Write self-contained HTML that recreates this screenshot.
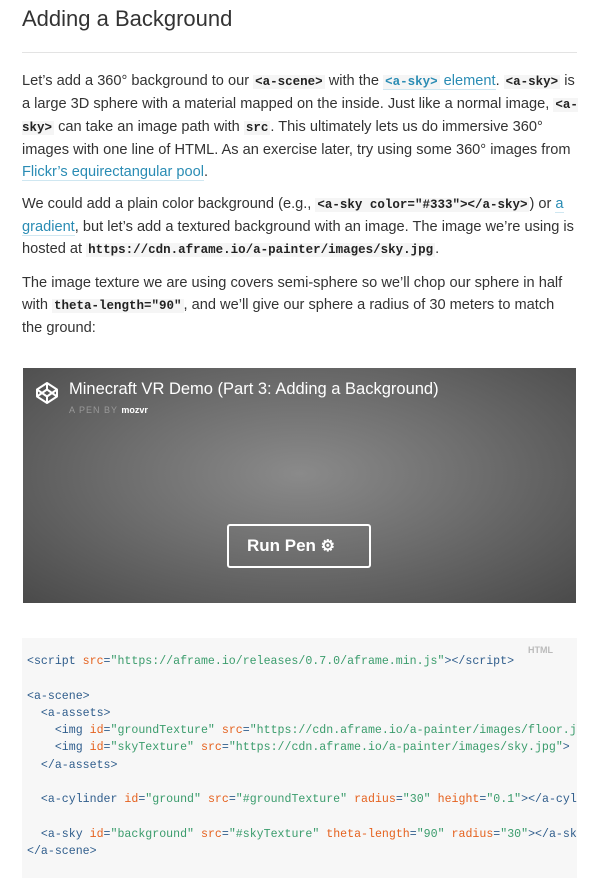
<!DOCTYPE html>
<html><head><style>
body{margin:0;background:#fff;width:604px;height:875px;overflow:hidden;font-family:"Liberation Sans",sans-serif;color:#333}
h2{position:absolute;left:22px;top:6px;margin:0;font-weight:normal;font-size:22px;color:#333}
.hr{position:absolute;left:22px;top:52px;width:555px;height:1px;background:#e3e3e3}
p{position:absolute;left:22px;width:556px;margin:0;font-size:14.6px;line-height:22px;color:#333}
code{font-family:"Liberation Mono",monospace;font-size:12.5px;font-weight:bold;background:#f5f5f5;padding:0 2px;color:#222}
a{color:#2a8cb4;text-decoration:none;border-bottom:1px solid #cfe7f1}
a code{color:#2a8cb4}
.pen{position:absolute;left:23px;top:368px;width:553px;height:235px;background:radial-gradient(ellipse at 50% 45%,#8a8a8a 0%,#6e6e6e 45%,#4a4a4a 100%)}
.pen .t{position:absolute;left:46px;top:12px;color:#fff;font-size:16.5px}
.pen .by{position:absolute;left:46px;top:37px;color:#999;font-size:9px;letter-spacing:1px}
.pen .by b{color:#fff;letter-spacing:0}
.run{position:absolute;left:204px;top:156px;width:140px;height:40px;border:2px solid #fff;border-radius:3px;color:#fff;font-weight:bold;font-size:17px;line-height:40px;text-indent:18px}
pre{position:absolute;left:22px;top:638px;width:555px;height:240px;margin:0;background:#f7f7f7;font-family:"Liberation Mono",monospace;font-size:11.6px;line-height:17.3px;padding:15px 0 0 5px;box-sizing:border-box;color:#2f5d8c;overflow:hidden;white-space:pre}
.lab{position:absolute;left:528px;top:645px;font-size:9px;font-weight:bold;color:#bbb}
.r{color:#e5621f}.g{color:#3a9c6c}
</style></head><body>
<h2>Adding a Background</h2>
<div class="hr"></div>
<p style="top:70px">Let’s add a 360° background to our <code>&lt;a-scene&gt;</code> with the <a href="#"><code>&lt;a-sky&gt;</code> element</a>. <code>&lt;a-sky&gt;</code> is a large 3D sphere with a material mapped on the inside. Just like a normal image, <code>&lt;a-sky&gt;</code> can take an image path with <code>src</code>. This ultimately lets us do immersive 360° images with one line of HTML. As an exercise later, try using some 360° images from <a href="#">Flickr’s equirectangular pool</a>.</p>
<p style="top:193px">We could add a plain color background (e.g., <code>&lt;a-sky color="#333"&gt;&lt;/a-sky&gt;</code>) or <a href="#">a gradient</a>, but let’s add a textured background with an image. The image we’re using is hosted at <code>https://cdn.aframe.io/a-painter/images/sky.jpg</code>.</p>
<p style="top:272px">The image texture we are using covers semi-sphere so we’ll chop our sphere in half with <code>theta-length="90"</code>, and we’ll give our sphere a radius of 30 meters to match the ground:</p>
<div class="pen">
<svg style="position:absolute;left:12px;top:13px" width="24" height="24" viewBox="0 0 24 24" fill="none" stroke="#fff" stroke-width="2" stroke-linejoin="round"><path d="M12 2L22 8.5V15.5L12 22L2 15.5V8.5Z M12 2V8.5 M12 15.5V22 M2 8.5L12 15.5L22 8.5 M2 15.5L12 8.5L22 15.5"/></svg>
<div class="t">Minecraft VR Demo (Part 3: Adding a Background)</div>
<div class="by">A PEN BY <b>mozvr</b></div>
<div class="run">Run Pen <span style="font-size:16px">⚙</span></div>
</div>
<pre>&lt;script <span class="r">src</span>=<span class="g">"https://aframe.io/releases/0.7.0/aframe.min.js"</span>&gt;&lt;/script&gt;

&lt;a-scene&gt;
  &lt;a-assets&gt;
    &lt;img <span class="r">id</span>=<span class="g">"groundTexture"</span> <span class="r">src</span>=<span class="g">"https://cdn.aframe.io/a-painter/images/floor.jpg"</span>&gt;
    &lt;img <span class="r">id</span>=<span class="g">"skyTexture"</span> <span class="r">src</span>=<span class="g">"https://cdn.aframe.io/a-painter/images/sky.jpg"</span>&gt;
  &lt;/a-assets&gt;

  &lt;a-cylinder <span class="r">id</span>=<span class="g">"ground"</span> <span class="r">src</span>=<span class="g">"#groundTexture"</span> <span class="r">radius</span>=<span class="g">"30"</span> <span class="r">height</span>=<span class="g">"0.1"</span>&gt;&lt;/a-cylinder&gt;

  &lt;a-sky <span class="r">id</span>=<span class="g">"background"</span> <span class="r">src</span>=<span class="g">"#skyTexture"</span> <span class="r">theta-length</span>=<span class="g">"90"</span> <span class="r">radius</span>=<span class="g">"30"</span>&gt;&lt;/a-sky&gt;
&lt;/a-scene&gt;</pre>
<div class="lab">HTML</div>
</body></html>
